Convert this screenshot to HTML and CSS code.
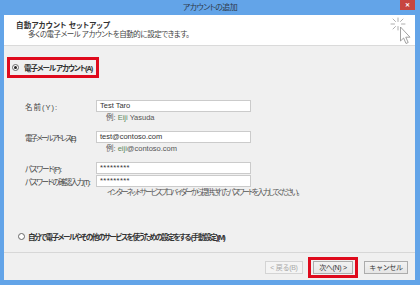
FILE: index.html
```html
<!DOCTYPE html>
<html lang="ja">
<head>
    <meta charset="UTF-8">
    <title>アカウントの追加</title>
    <link rel="stylesheet" href="styles.css">
</head>
<body>
    <div class="window">
        <div class="titlebar">
            <span></span>
            <span class="title">アカウントの追加</span>
            <span class="close">✕</span>
        </div>

        <div class="client">
            <!-- ヘッダー -->
            <div class="header">
                <div class="header-text">
                    <div class="header-title">自動アカウント セットアップ</div>
                    <div class="header-sub">多くの電子メール アカウントを自動的に設定できます。</div>
                </div>
                <svg class="header-icon" width="24" height="28" viewBox="0 0 24 28">
                    <g stroke="#9a9a9a" stroke-width="0.8" stroke-linecap="round">
                        <line x1="9" y1="1" x2="9" y2="4.5"/>
                        <line x1="9" y1="9.5" x2="9" y2="13"/>
                        <line x1="2" y1="7" x2="5.5" y2="7"/>
                        <line x1="12.5" y1="7" x2="16" y2="7"/>
                        <line x1="4" y1="2" x2="6.5" y2="4.5"/>
                        <line x1="14" y1="2" x2="11.5" y2="4.5"/>
                        <line x1="4" y1="12" x2="6.5" y2="9.5"/>
                    </g>
                    <path d="M11.5 10 L11.5 24 L14.6 21 L17 26.5 L19.2 25.5 L16.8 20.2 L21 20.2 Z"
                          fill="#fff" stroke="#8a8a8a" stroke-width="0.8" stroke-linejoin="round"/>
                </svg>
            </div>

            <!-- 本体 -->
            <div class="content">
                <div class="option option-auto">
                    <span class="radio checked"></span>
                    <span class="option-label">電子メール アカウント(A)</span>
                </div>

                <div class="form">
                    <label class="label label-name">名前(Y):</label>
                    <div class="input">Test Taro</div>
                    <div></div>
                    <div class="hint">例: <span class="sample">Eiji</span> Yasuda</div>

                    <label class="label label-mail row-gap">電子メール アドレス(E):</label>
                    <div class="input row-gap">test@contoso.com</div>
                    <div></div>
                    <div class="hint">例: <span class="sample">eiji</span>@contoso.com</div>

                    <label class="label label-pass row-gap">パスワード(P):</label>
                    <div class="input row-gap password">*********</div>
                    <label class="label label-confirm row-tight">パスワードの確認入力(T):</label>
                    <div class="input row-tight password">*********</div>
                    <div></div>
                    <div class="hint note">インターネット サービス プロバイダーから提供されたパスワードを入力してください。</div>
                </div>

                <div class="option option-manual">
                    <span class="radio"></span>
                    <span class="option-label">自分で電子メールやその他のサービスを使うための設定をする (手動設定)(M)</span>
                </div>
            </div>

            <!-- ボタン -->
            <div class="footer">
                <button class="btn btn-back" disabled>&lt; 戻る(B)</button>
                <div class="highlight">
                    <button class="btn btn-next">次へ(N) &gt;</button>
                </div>
                <button class="btn btn-cancel">キャンセル</button>
            </div>
        </div>
    </div>
</body>
</html>
```

FILE: styles.css
```css
body {
    margin: 0;
    padding: 0;
    font-family: "Liberation Sans", "Noto Sans CJK JP", sans-serif;
    font-feature-settings: "palt" 1;
    font-size: 7.5px;
    color: #444;
}

.window {
    width: 420px;
    height: 285px;
    background: #63a4e8;
    display: flex;
    flex-direction: column;
}

/* タイトルバー */
.titlebar {
    height: 15px;
    display: grid;
    grid-template-columns: 1fr auto 1fr;
    align-items: start;
}

.title {
    line-height: 15px;
    font-size: 8px;
    color: #2f3b4a;
    letter-spacing: -0.6px;
}

.close {
    justify-self: end;
    width: 15px;
    height: 10px;
    margin-right: 5px;
    background: #c7463f;
    color: #fff;
    font-size: 6px;
    font-weight: bold;
    line-height: 10px;
    text-align: center;
}

.client {
    flex: 1;
    margin: 0 5px 5px 4px;
    background: #f0f0f0;
    display: flex;
    flex-direction: column;
}

/* ヘッダー */
.header {
    height: 30px;
    background: #fff;
    border-bottom: 1px solid #dadada;
    display: flex;
    justify-content: space-between;
}

.header-text {
    padding: 6px 0 0 12px;
}

.header-title {
    font-weight: bold;
    color: #333;
    line-height: 9px;
    letter-spacing: 0.2px;
    white-space: pre;
}

.header-sub {
    padding-left: 12px;
    line-height: 9px;
    letter-spacing: -0.45px;
    white-space: pre;
}

.header-icon {
    margin: 2px 2px 0 0;
}

/* 本体 */
.content {
    flex: 1;
    padding: 11px 0 0 3px;
    display: flex;
    flex-direction: column;
}

.option {
    display: flex;
    align-items: center;
    gap: 5px;
}

.option-auto {
    align-self: flex-start;
    height: 15px;
    width: 84px;
    padding-left: 2px;
    border: 3px solid #df0a1c;
    font-weight: bold;
    color: #333;
    letter-spacing: -1.05px;
}

.option-manual {
    margin-top: auto;
    margin-bottom: 11px;
    padding-left: 11px;
    height: 10px;
    gap: 3px;
    color: #333;
    font-weight: bold;
    letter-spacing: -1.4px;
}

.radio {
    flex: none;
    width: 5px;
    height: 5px;
    border: 1px solid #666;
    border-radius: 50%;
    background: #fff;
    display: flex;
    align-items: center;
    justify-content: center;
}

.radio.checked::after {
    content: "";
    width: 3px;
    height: 3px;
    border-radius: 50%;
    background: #222;
}

.option-label {
    white-space: pre;
}

/* 入力フォーム */
.form {
    margin: 22px 0 0 18px;
    display: grid;
    grid-template-columns: 71px 155px;
    align-items: center;
}

.label {
    white-space: pre;
}

.label-name {
    letter-spacing: 1px;
}

.label-mail {
    letter-spacing: -1.9px;
}

.label-pass {
    letter-spacing: -1.1px;
}

.label-confirm {
    letter-spacing: -1.3px;
}

.input {
    height: 10px;
    border: 1px solid #cbcbcb;
    background: #fff;
    padding-left: 3px;
    line-height: 10px;
    color: #333;
}

.password {
    letter-spacing: 0.4px;
}

.row-gap {
    margin-top: 7px;
}

.row-tight {
    margin-top: 1px;
}

.hint {
    height: 12px;
    line-height: 12px;
    padding-left: 10px;
    white-space: pre;
    color: #555;
}

.sample {
    color: #5f8a62;
}

.note {
    padding-left: 11px;
    letter-spacing: -1.9px;
}

/* ボタン */
.footer {
    height: 28px;
    box-sizing: border-box;
    border-top: 1px solid #d7d7d7;
    padding: 1px 7px 0 0;
    display: flex;
    align-items: center;
    justify-content: flex-end;
}

.btn {
    height: 13px;
    padding: 0;
    font-family: inherit;
    font-size: 7px;
    border: 1px solid #acacac;
    background: linear-gradient(#f2f2f2, #e6e6e6);
    color: #333;
    letter-spacing: -0.3px;
}

.btn-back {
    width: 38px;
    border-color: #d4d4d4;
    background: #f4f4f4;
    color: #a8a8a8;
}

.highlight {
    margin: 0 6px 0 5px;
    padding: 1px 2px;
    border: 3px solid #df0a1c;
    display: flex;
}

.btn-next {
    width: 40px;
}

.btn-cancel {
    width: 44px;
}
```
